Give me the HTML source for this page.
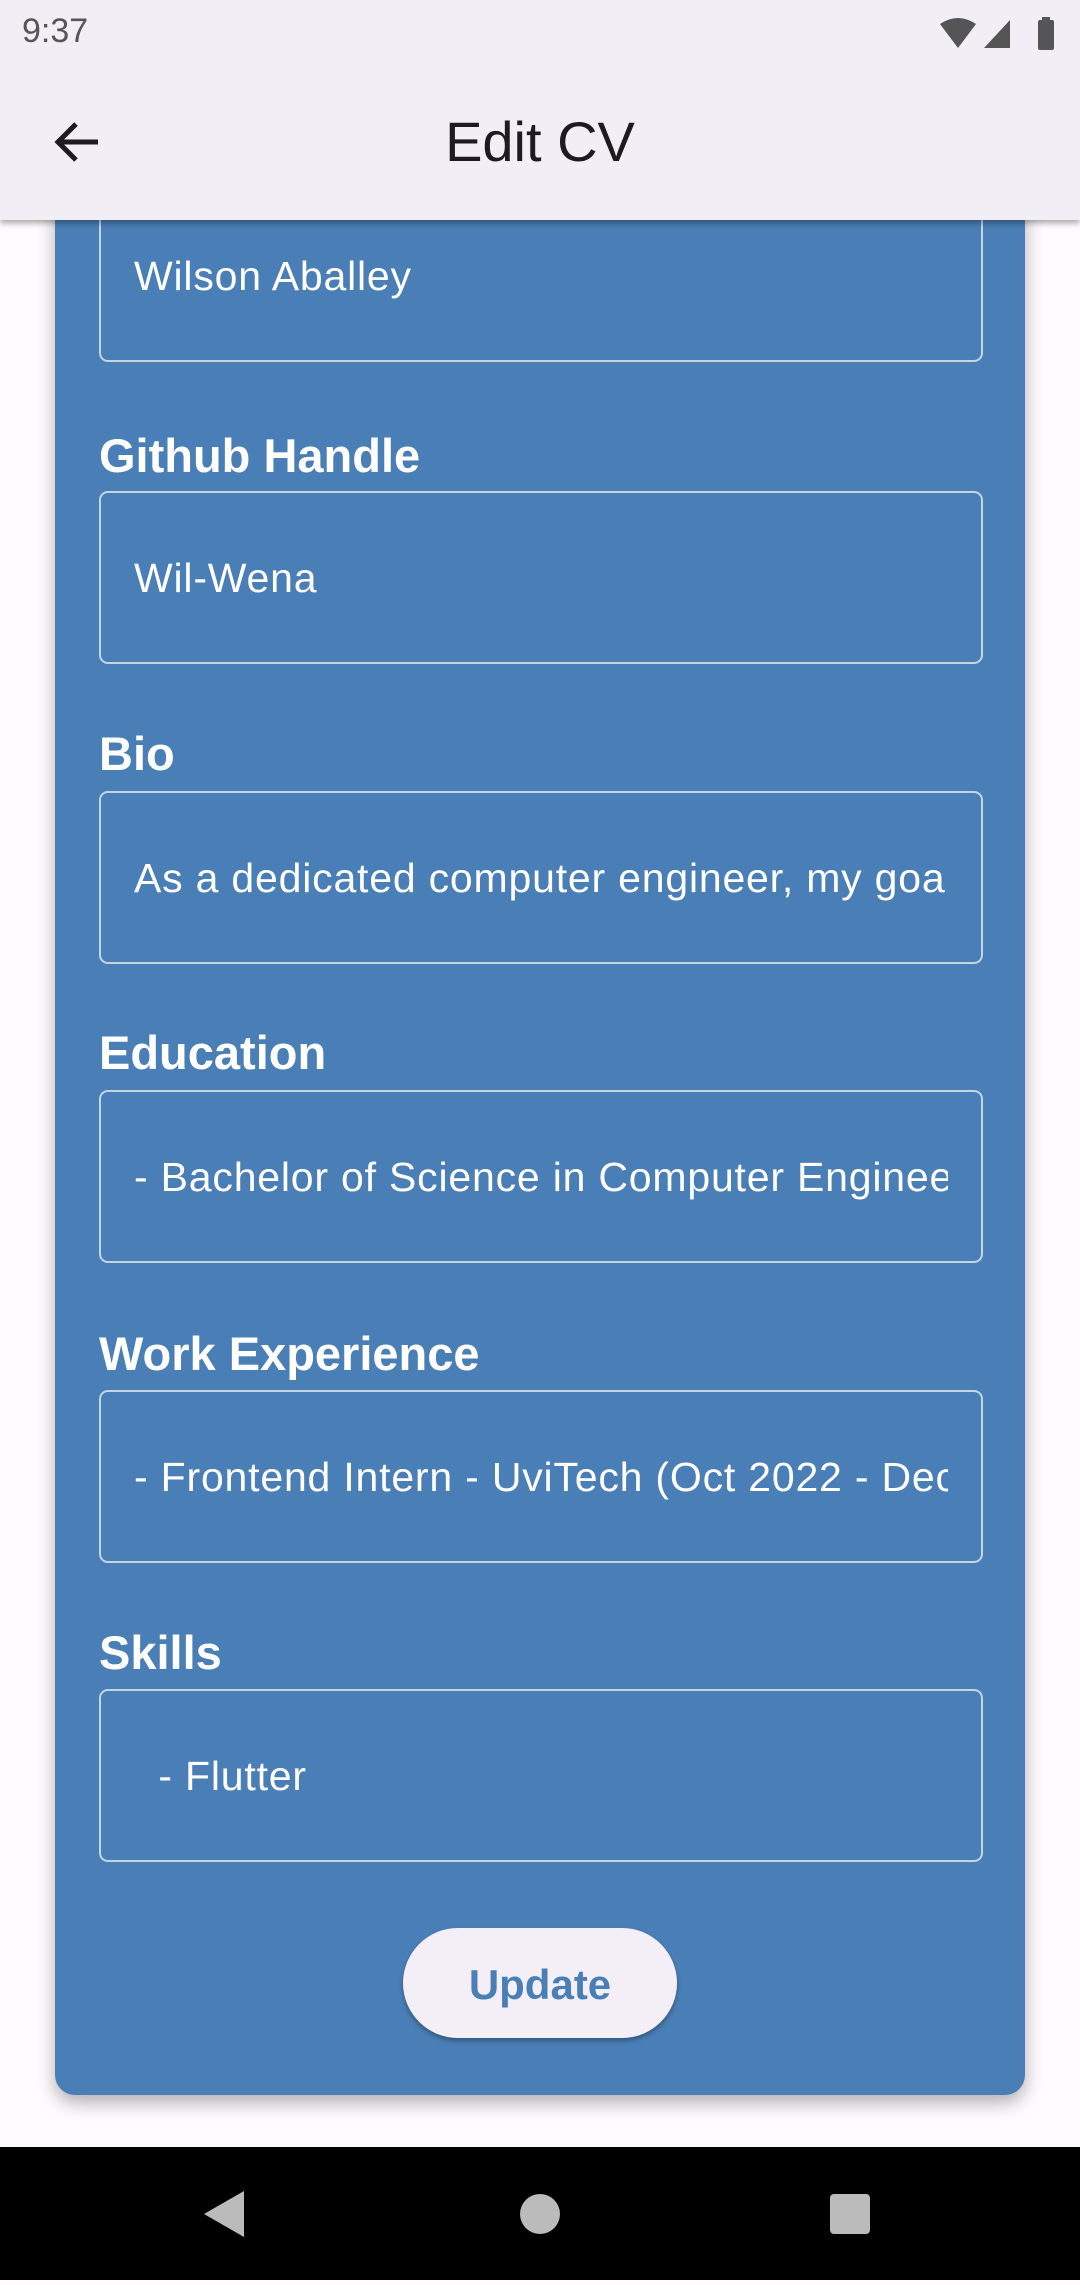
<!DOCTYPE html>
<html><head><meta charset="utf-8"><style>
*{margin:0;padding:0;box-sizing:border-box}
body{width:1080px;height:2280px;background:#fffbfe;font-family:"Liberation Sans",Roboto,sans-serif;position:relative;overflow:hidden}
.card{position:absolute;left:55px;top:160px;width:970px;height:1935px;background:#4a7eb6;border-radius:20px;box-shadow:0 8px 18px rgba(0,0,0,.3)}
.appbar{position:absolute;left:0;top:0;width:1080px;height:220px;background:#f2eef5;box-shadow:0 3px 6px rgba(0,0,0,.35);z-index:2}
.lab{position:absolute;left:99px;color:#fff;font-weight:bold;font-size:47px}
.f{position:absolute;left:99px;width:884px;height:173px;border:2.5px solid #c6d3e3;border-radius:9px}
.f span{position:absolute;left:33px;top:0;width:814px;height:168px;overflow:hidden;color:#fff;font-size:41px;line-height:170px;white-space:nowrap;letter-spacing:0.8px}
</style></head><body>
<div class="card"></div>
<div class="f" style="top:189px"><span>Wilson Aballey</span></div>
<div class="lab" style="top:428px">Github Handle</div>
<div class="f" style="top:491px"><span>Wil-Wena</span></div>
<div class="lab" style="top:726px">Bio</div>
<div class="f" style="top:791px"><span>As a dedicated computer engineer, my goal is</span></div>
<div class="lab" style="top:1025px">Education</div>
<div class="f" style="top:1090px"><span>- Bachelor of Science in Computer Engineering</span></div>
<div class="lab" style="top:1326px">Work Experience</div>
<div class="f" style="top:1390px"><span>- Frontend Intern - UviTech (Oct 2022 - Dec</span></div>
<div class="lab" style="top:1625px">Skills</div>
<div class="f" style="top:1689px"><span>&nbsp;&nbsp;- Flutter</span></div>
<div style="position:absolute;left:403px;top:1928px;width:274px;height:110px;border-radius:55px;background:#f4eff6;box-shadow:0 3px 5px rgba(0,0,0,.3);color:#4a7eb6;font-weight:bold;font-size:42px;text-align:center;line-height:114px">Update</div>
<div class="appbar">
<div style="position:absolute;left:22px;top:12px;font-size:34px;color:#555">9:37</div>
<svg style="position:absolute;left:938px;top:16px" width="120" height="36" viewBox="0 0 120 36">
<path d="M2 8 Q20 -4 38 8 L20 32 Z" fill="#555"/>
<path d="M46 32 L72 4 L72 32 Z" fill="#555"/>
<rect x="100" y="4" width="16" height="30" rx="2" fill="#555"/><rect x="104" y="1" width="8" height="4" fill="#555"/>
</svg>
<svg style="position:absolute;left:52px;top:120px" width="48" height="44" viewBox="0 0 48 44"><path d="M46 22H6M24 4L6 22l18 18" stroke="#1d1b20" stroke-width="5" fill="none"/></svg>
<div style="position:absolute;left:0;width:1080px;top:109px;text-align:center;font-size:56px;color:#1d1b20">Edit CV</div>
</div>
<div style="position:absolute;left:0;top:2147px;width:1080px;height:133px;background:#000">
<svg width="1080" height="133"><path d="M204 67 L244 44 L244 90 Z" fill="#bbb"/><circle cx="540" cy="67" r="20" fill="#bbb"/><rect x="830" y="47" width="40" height="40" rx="4" fill="#bbb"/></svg>
</div>
</body></html>
